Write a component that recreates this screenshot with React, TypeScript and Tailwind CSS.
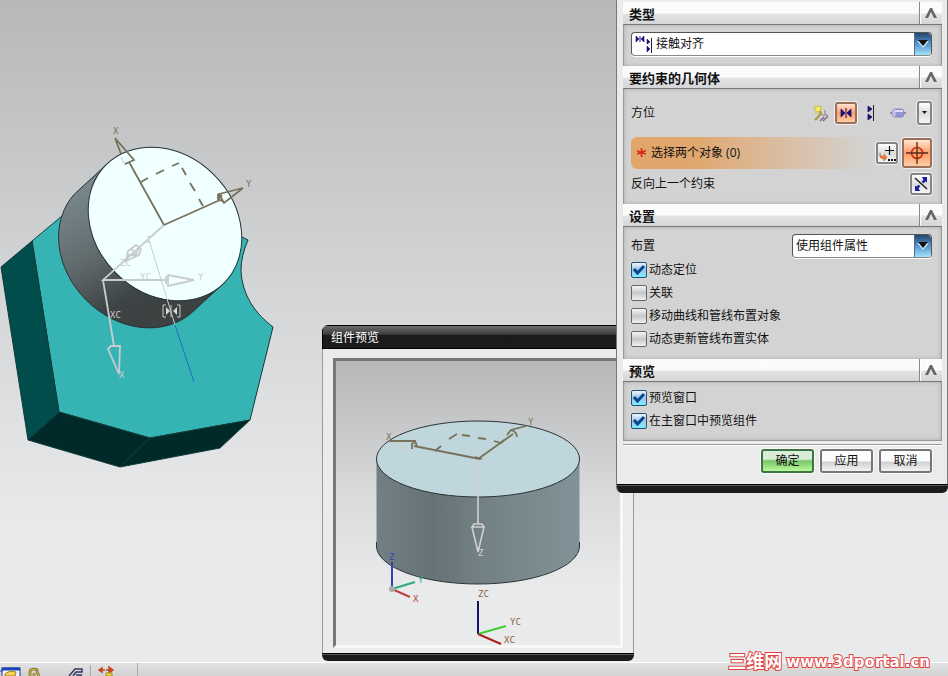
import type { ReactNode } from "react";

const Chevron = () => (
	<svg width="12" height="11" viewBox="0 0 12 11" aria-hidden="true">
		<path d="M0 10 5 0H7L12 10H9L6 4 3 10Z" fill="#666" />
	</svg>
);

const MateIcon = () => (
	<svg width="12" height="10" viewBox="0 0 12 10" aria-hidden="true">
		<path d="M1 1 5 5 1 9ZM11 1 7 5 11 9Z" fill="#17127c" stroke="#17127c" strokeWidth=".8" />
		<path d="M6 0V10" stroke="#17127c" />
	</svg>
);

const AlignIcon = () => (
	<svg width="8" height="16" viewBox="0 0 8 16" aria-hidden="true">
		<path d="M1 1 5 4 1 7ZM1 9 5 12 1 15Z" fill="#17127c" stroke="#17127c" strokeWidth=".8" />
		<path d="M6.5 0V16" stroke="#222" />
	</svg>
);

const TouchAlignIcon = () => (
	<svg width="18" height="18" viewBox="0 0 18 18" aria-hidden="true">
		<path d="M1 1 4 4 1 7ZM9 1 6 4 9 7Z" fill="#17127c" stroke="#17127c" strokeWidth=".6" />
		<path d="M5 1V7" stroke="#17127c" />
		<path d="M12 4 15 7 12 9ZM12 11 15 14 12 17Z" fill="#17127c" stroke="#17127c" strokeWidth=".6" />
		<path d="M16.5 3V18" stroke="#222" />
	</svg>
);

const WandIcon = () => (
	<svg width="16" height="18" viewBox="0 0 16 18" aria-hidden="true">
		<path d="M5 1V11M0 5H9M1 2 9 9M9 2 2 9" stroke="#cfc85c" strokeWidth="1.2" />
		<circle cx="5" cy="5" r="3" fill="#f1ee65" stroke="#b9b24a" strokeWidth=".6" />
		<path d="M2 16 8 10 7 7" fill="none" stroke="#9e963c" strokeWidth="1.8" />
		<path d="M9 11H15M12 6V11" stroke="#8a8088" />
		<path d="M7 17 11 13M10 17 15 12" stroke="#875c86" strokeWidth="1.4" />
	</svg>
);

const CylinderIcon = () => (
	<svg width="16" height="12" viewBox="0 0 16 12" aria-hidden="true">
		<path d="M0 6H16" stroke="#ad3434" />
		<path d="M4 2H12Q14 2 14 6T12 10H4Q2 10 2 6T4 2Z" fill="#9396d6" stroke="#7b7ebc" strokeWidth=".8" />
		<path d="M5 4H13" stroke="#dcdefa" strokeWidth="2" />
		<ellipse cx="4" cy="6" rx="1.6" ry="4" fill="#c0c3ee" />
	</svg>
);

const CrosshairIcon = () => (
	<svg width="22" height="24" viewBox="0 0 22 24" aria-hidden="true">
		<circle cx="11" cy="12" r="5.5" fill="none" stroke="#cb2b12" strokeWidth="1.6" />
		<path d="M11 1V23M0 12H22" stroke="#5a2d1c" strokeWidth="1.4" />
	</svg>
);

const AddPointIcon = () => (
	<svg width="18" height="18" viewBox="0 0 18 18" className="shrink-0" aria-hidden="true">
		<path d="M11.5 2V11M7 6.5H16" stroke="#111" strokeWidth="1.2" />
		<path d="M2 9Q2 13 6 12V10L9 13.5 6 17V15Q1 15 2 9Z" fill="#ec792f" stroke="#a8592a" strokeWidth=".5" />
		<path d="M10 16H12M13 16H15M16 16H18" stroke="#111" strokeWidth="2" />
	</svg>
);

const ReverseIcon = () => (
	<svg width="16" height="16" viewBox="0 0 16 16" className="shrink-0" aria-hidden="true">
		<path d="M2 2 14 13" stroke="#222" strokeWidth="1.5" />
		<path d="M5 11 6.5 9.500M9.500 6.500 11 5" stroke="#17209c" strokeWidth="2" />
		<path d="M14 1V6.500L12.500 5.500 10.500 7 9 5.500 10.500 4 9 1ZM2 15V9.500L3.500 10.500 5.500 9 7 10.500 5.500 12 7 15Z" fill="#17209c" />
	</svg>
);

const DropArrow = () => (
	<span className="pointer-events-none flex w-[17px] shrink-0 items-center justify-center rounded-r-sm border-l border-[#44719d] bg-linear-to-b from-[#24456f] via-[#5794cd] to-[#a2e3fb]">
		<svg width="12" height="8" viewBox="0 0 12 8" aria-hidden="true">
			<path d="M0 1H12L6 8Z" fill="#cce7fa" />
			<path d="M1 0H11L6 6Z" fill="#111" />
		</svg>
	</span>
);

type DropdownProps = {
	label: string;
	options: string[];
	className?: string;
	icon?: ReactNode;
};

const Dropdown = ({ label, options, className = "", icon }: DropdownProps) => (
	<div className={`flex h-6 rounded-sm border border-[#555] border-b-[#888] bg-white shadow-[0_1px_0_#fff] ${className}`}>
		{icon && <span className="flex items-center pl-[3px]">{icon}</span>}
		<select aria-label={label} className="min-w-0 flex-1 appearance-none bg-transparent px-[3px] text-xs outline-none">
			{options.map((option) => (
				<option key={option}>{option}</option>
			))}
		</select>
		<DropArrow />
	</div>
);

const CheckRow = ({ label, checked = false }: { label: string; checked?: boolean }) => (
	<label className="flex h-[23px] items-center gap-[2px]">
		<span className="grid">
			<input
				type="checkbox"
				defaultChecked={checked}
				className="peer col-start-1 row-start-1 size-4 appearance-none rounded-xs border border-[#666] bg-linear-to-b from-[#f7f7f7] via-[#c5c7c9] to-[#f2f2f2] checked:border-[#285071] checked:from-[#eef5fc] checked:via-[#9fc4e9] checked:to-[#72f0ff]"
			/>
			<svg viewBox="0 0 16 16" className="pointer-events-none invisible col-start-1 row-start-1 size-4 peer-checked:visible" aria-hidden="true">
				<path d="M3 7 6.5 11 13 4" fill="none" stroke="#08488e" strokeWidth="3" />
			</svg>
		</span>
		{label}
	</label>
);

const Section = ({ title, className, children }: { title: string; className: string; children: ReactNode }) => (
	<section>
		<div className="flex h-[23px] border-b border-[#777] bg-linear-to-b from-[#fbfbfb] from-50% via-[#e2e3e4] via-55% to-[#d5d6d8]">
			<h2 className="flex-1 pl-[6px] text-[13px] leading-6 font-bold">{title}</h2>
			<button type="button" aria-label={title} className="flex w-[23px] items-center justify-center border-l border-[#888] shadow-[inset_1px_0_0_#fff]">
				<Chevron />
			</button>
		</div>
		<div className={`border-x border-[#999] bg-[#d3d3d3] pr-[9px] pl-[7px] shadow-[inset_0_0_4px_#aaa] ${className}`}>{children}</div>
	</section>
);

const toolButton = "flex items-center justify-center rounded-[3px] border-2 border-[#858585] bg-linear-to-b from-white via-[#dcdcdc] to-[#f6f6f6] shadow-[0_0_0_1px_#eee]";
const activeButton = "flex items-center justify-center rounded-[3px] border-2 border-[#98705c] bg-linear-to-b from-[#ffe5d2] via-[#ff9c66] to-[#ffcda5] shadow-[0_0_0_1px_#eee]";
const actionButton = "h-6 w-[53px] rounded-[3px] border-2 shadow-[0_0_0_1px_#f8f8f8]";
const plainAction = "border-[#777] bg-linear-to-b from-[#fdfdfd] from-50% via-[#cfd0d2] via-55% to-[#f3f3f3]";

const ConstraintDialog = () => (
	<form className="absolute top-0 right-0 w-[332px] overflow-hidden rounded-b-md border-l border-[#777] bg-[#ebebeb]" onSubmit={(e) => e.preventDefault()}>
		<div className="border-r border-[#777] pt-[2px] pr-[5px] pl-[6px]">
			<Section title="类型" className="pt-[7px] pb-[10px]">
				<Dropdown label="类型" options={["接触对齐", "同心", "距离"]} icon={<TouchAlignIcon />} />
			</Section>

			<Section title="要约束的几何体" className="pt-3 pb-[9px]">
				<div className="mb-3 flex h-6 items-center gap-[6px]">
					<span className="flex-1">方位</span>
					<button type="button" aria-label="首选接触" className="w-4">
						<WandIcon />
					</button>
					<button type="button" aria-label="接触" className={`size-[22px] ${activeButton}`}>
						<MateIcon />
					</button>
					<button type="button" aria-label="对齐" className="flex w-4 justify-center">
						<AlignIcon />
					</button>
					<button type="button" aria-label="自动判断中心" className="flex w-[26px] justify-center">
						<CylinderIcon />
					</button>
					<button type="button" aria-label="更多" className={`h-6 w-[15px] ${toolButton}`}>
						<svg width="7" height="4" viewBox="0 0 7 4" className="shrink-0" aria-hidden="true">
							<path d="M1 0H6L3.5 3Z" fill="#111" />
						</svg>
					</button>
				</div>
				<div className="mb-1 flex h-8 items-center gap-1">
					<div className="flex h-full flex-1 items-center gap-[5px] rounded-l-md bg-linear-to-r from-[#e0a66c] from-25% to-[#d3d3d3] pl-[6px]">
						<svg width="9" height="10" viewBox="0 0 9 10" aria-hidden="true">
							<path d="M4.5 0V9M0 3 9 6M9 2.5 0 6" stroke="#d32613" strokeWidth="1.6" />
						</svg>
						<span>选择两个对象 (0)</span>
					</div>
					<button type="button" aria-label="点构造器" className={`size-[22px] ${toolButton}`}>
						<AddPointIcon />
					</button>
					<button type="button" aria-label="选择对象" className={`size-[30px] ${activeButton}`}>
						<CrosshairIcon />
					</button>
				</div>
				<div className="flex items-center justify-between">
					<span>反向上一个约束</span>
					<button type="button" aria-label="反向上一个约束" className={`size-[22px] ${toolButton}`}>
						<ReverseIcon />
					</button>
				</div>
			</Section>

			<Section title="设置" className="pt-[7px] pb-[9px]">
				<div className="flex items-center justify-between">
					<span>布置</span>
					<Dropdown label="布置" options={["使用组件属性", "应用到已使用的"]} className="w-[140px]" />
				</div>
				<CheckRow label="动态定位" checked />
				<CheckRow label="关联" />
				<CheckRow label="移动曲线和管线布置对象" />
				<CheckRow label="动态更新管线布置实体" />
			</Section>

			<Section title="预览" className="border-b pt-1 pb-2">
				<CheckRow label="预览窗口" checked />
				<CheckRow label="在主窗口中预览组件" checked />
			</Section>

			<div className="mt-[3px] flex justify-end gap-[6px] border-t border-[#999] pt-1 pr-[10px] pb-[11px] shadow-[inset_0_1px_0_#fff]">
				<button type="submit" className={`${actionButton} border-[#3d7443] bg-linear-to-b from-[#d9ecd5] from-40% via-[#78c66a] via-50% to-[#b8fb9a]`}>
					确定
				</button>
				<button type="button" className={`${actionButton} ${plainAction}`}>
					应用
				</button>
				<button type="button" className={`${actionButton} ${plainAction}`}>
					取消
				</button>
			</div>
		</div>
		<div className="h-[9px] border-t border-black bg-[#1c1c1c] shadow-[inset_0_1px_0_#555]" />
	</form>
);

const PreviewScene = () => (
	<svg width="287" height="284" viewBox="336 361 287 284" className="block bg-linear-to-b from-[#b7b8ba] via-[#dbdcde] to-[#e9eaec] to-80%" role="img" aria-label="组件预览">
		<defs>
			<linearGradient id="side">
				<stop offset="0" stopColor="#728085" />
				<stop offset=".28" stopColor="#657276" />
				<stop offset=".5" stopColor="#728083" />
				<stop offset=".8" stopColor="#7b8c90" />
				<stop offset="1" stopColor="#819398" />
			</linearGradient>
		</defs>
		<path d="M376.5 459V546A101.5 38 0 0 0 579.5 546V459Z" fill="url(#side)" />
		<path d="M376.5 542V546A101.5 38 0 0 0 579.5 546V542" fill="none" stroke="#2b3335" />
		<ellipse cx="478" cy="459" rx="101.5" ry="38" fill="#bfd6dc" stroke="#2b3335" />
		<g fill="none" stroke="#cfcfcf" strokeWidth="2">
			<path d="M478 459V524M472 527 478 552 484 527M472 527 474 524H482L484 527Z" strokeWidth="1.6" />
			<path d="M390 442 413 452 417 447M506 434 513 441 518 436 525 427" strokeWidth="1" />
		</g>
		<g fill="none" stroke="#77725a" strokeWidth="1.8">
			<path d="M480 459 414 446M389 441H415L417 446M412 449V444L415 442M478 459 513 434M526 426 511 430 507 435M511 430Q517 432 517 437M475 457 482 459" />
			<path d="M435 451 441 446M449 439 457 434M462 435 470 436M478 438 486 439M494 441 501 443 504 440" />
		</g>
		<g fill="none" strokeWidth="2">
			<path d="M392 589V562" stroke="#3b41ac" />
			<path d="M392 589 415 582" stroke="#2bab82" />
			<path d="M392 589 410 597" stroke="#bb403b" />
			<path d="M478 634V601" stroke="#151465" />
			<path d="M478 634 506 626" stroke="#3ccd35" />
			<path d="M478 634 501 644" stroke="#a9221b" />
		</g>
		<circle cx="392" cy="589" r="3" fill="#aaa" />
		<g className="font-['DejaVu_Sans_Mono',monospace] text-[9px]">
			<text x="386" y="440" fill="#77725a">X</text>
			<text x="528" y="425" fill="#77725a">Y</text>
			<text x="478" y="556" fill="#d2d5d5">Z</text>
			<text x="389" y="560" fill="#3b41ac">Z</text>
			<text x="418" y="583" fill="#2bab82">Y</text>
			<text x="413" y="602" fill="#bb403b">X</text>
			<text x="478" y="597" fill="#8c6541">ZC</text>
			<text x="510" y="625" fill="#8c6541">YC</text>
			<text x="504" y="643" fill="#8c6541">XC</text>
		</g>
	</svg>
);

const PreviewWindow = () => (
	<div className="absolute top-[325px] left-[322px] w-[312px] overflow-hidden rounded-md bg-[#ebebeb]">
		<div className="h-6 border border-black bg-linear-to-b from-[#6b6c6e] via-[#3d3d3f] via-38% to-[#1b1b1b] to-42% pl-2 text-xs leading-6 text-white">组件预览</div>
		<div className="border-x border-[#999] px-[10px] pt-[9px] pb-[5px]">
			<div className="overflow-hidden border-[3px] border-t-[#777] border-r-[#f8f8f8] border-b-[#f8f8f8] border-l-[#777]">
				<PreviewScene />
			</div>
		</div>
		<div className="h-2 border-t border-black bg-[#1c1c1c] shadow-[inset_0_1px_0_#555]" />
	</div>
);

const AssemblyScene = () => (
	<svg width="300" height="480" viewBox="0 0 300 480" className="block" role="img" aria-label="装配">
		<defs>
			<linearGradient id="barrel" gradientUnits="userSpaceOnUse" x1="75" y1="195" x2="140" y2="315">
				<stop offset="0" stopColor="#77868b" />
				<stop offset=".45" stopColor="#616b6e" />
				<stop offset=".85" stopColor="#3e4445" />
				<stop offset="1" stopColor="#3c4142" />
			</linearGradient>
		</defs>
		<g stroke="#123b3b" strokeLinejoin="round">
			<path d="M32 241 62 216 150 190 238 235 248 240Q241 256 241 270C242 296 256 314 273 327L250 420 150 438 59 412Z" fill="#36b4b3" />
			<path d="M1 267 32 241 59 412 28 440Z" fill="#004d4c" />
			<path d="M59 412 150 438 120 467 28 440Z" fill="#002a2a" />
			<path d="M150 438 250 420 220 448 120 467Z" fill="#002a2a" />
		</g>
		<g stroke="#273436">
			{/* swept outline of the barrel: two parallel edges closed by the rear rim */}
			<path d="M106 165 74.5 194A83.5 69.4 45 0 0 192.5 312L224 283Z" fill="url(#barrel)" />
			<ellipse cx="165" cy="224" rx="83.5" ry="69.4" transform="rotate(45 165 224)" fill="#f0ffff" />
		</g>
		<g fill="none" stroke="#c9cccc" strokeWidth="1.8">
			<path d="M164 225 103 280H168M168 275 194 280 168 286ZM166 276V284M103 280 114 346M108 349 111 346H120L119 374Z" />
			<path d="M126 261 128 251 136 245 141 249 139 255 130 259ZM124 262 129 255M128 255H136L139 247M131 248 137 256" />
			<path d="M149 240 175 325M121 157 125 165 130 161" strokeWidth="1" />
			<path d="M166 305H163V317H166M177 305H180V317H177M171 305V317" strokeWidth="1" />
			<path d="M166 307 170 311 166 315ZM177 307 173 311 177 315Z" fill="#d5d8d8" stroke="none" />
		</g>
		<path d="M175 325 194 382" stroke="#1c6fba" />
		<g fill="none" stroke="#77725a" strokeWidth="1.8">
			<path d="M164 225 129 162M115 138 134 160 125 164M115 138 121 154M164 225 220 200M243 188 219 194 224 203ZM218 194V199L224 202M218 199 222 195" />
			<path d="M141 182 148 178M156 174 164 170M172 166 179 163M182 168 186 175M190 183 195 191M199 199 203 206" />
		</g>
		<g className="font-['DejaVu_Sans_Mono',monospace] text-[9px]" fill="#c9cccc">
			<text x="113" y="134" fill="#77725a">X</text>
			<text x="246" y="187" fill="#77725a">Y</text>
			<text x="146" y="243">Z</text>
			<text x="120" y="266">ZC</text>
			<text x="140" y="280">YC</text>
			<text x="198" y="280">Y</text>
			<text x="110" y="318">XC</text>
			<text x="119" y="378">X</text>
		</g>
	</svg>
);

const Taskbar = () => (
	<footer className="flex h-[14px] shrink-0 overflow-hidden border-t border-white bg-linear-to-b from-[#e2e2e2] to-[#d2d2d2]">
		<svg width="140" height="13" viewBox="0 0 140 13" aria-hidden="true">
			<rect x="2" y="5" width="18" height="12" fill="#eef3ff" stroke="#18358e" />
			<path d="M2 6H20" stroke="#1845b5" strokeWidth="3" />
			<path d="M5 11 10 8 16 9 15 13H5Z" fill="#f5d651" stroke="#a27d21" />
			<path d="M0 8H3" stroke="#1845b5" />
			<path d="M30 13V9Q30 6 34 6T37 9L39 13M34 13V10" fill="none" stroke="#706315" strokeWidth="2.6" />
			<path d="M30 13V9Q30 6 34 6T37 9L39 13M34 13V10" fill="none" stroke="#e3d35b" />
			<path d="M69 13 75 6H82V9H76L73 13M76 12H82" fill="none" stroke="#333a63" strokeWidth="1.5" />
			<path d="M90.5 2V13M137.5 0V13" stroke="#aaa" />
			<path d="M99 7 102 5V9ZM113 7 109 4V10ZM101 7H105M106 7H110" fill="#c34726" stroke="#c34726" strokeWidth="1.5" />
			<path d="M106 10H112V13H106Z" fill="#f1df31" stroke="#9c8c22" />
		</svg>
	</footer>
);

const App = () => {
	return (
		<main className="relative flex h-screen flex-col overflow-hidden bg-[#e8e9eb] font-['Open_Sans','Noto_Sans_CJK_SC',sans-serif] text-xs text-[#111]">
			<div className="relative min-h-0 flex-1 bg-linear-to-b from-[#b7b8ba] via-[#d5d6d8] via-45% to-[#e9eaec] to-80%">
				<AssemblyScene />
				<PreviewWindow />
				<ConstraintDialog />
			</div>
			<Taskbar />
			<a
				href="#portal"
				className="absolute right-[18px] bottom-1 flex items-center gap-1 font-['DejaVu_Sans','Noto_Sans_CJK_SC',sans-serif] text-[15px] leading-5 font-bold whitespace-nowrap text-white [-webkit-text-stroke:2px_#e0433f] [paint-order:stroke_fill]"
			>
				<span className="text-[18px]">三维网</span>
				<span>www.3dportal.cn</span>
			</a>
		</main>
	);
};

export default App;
